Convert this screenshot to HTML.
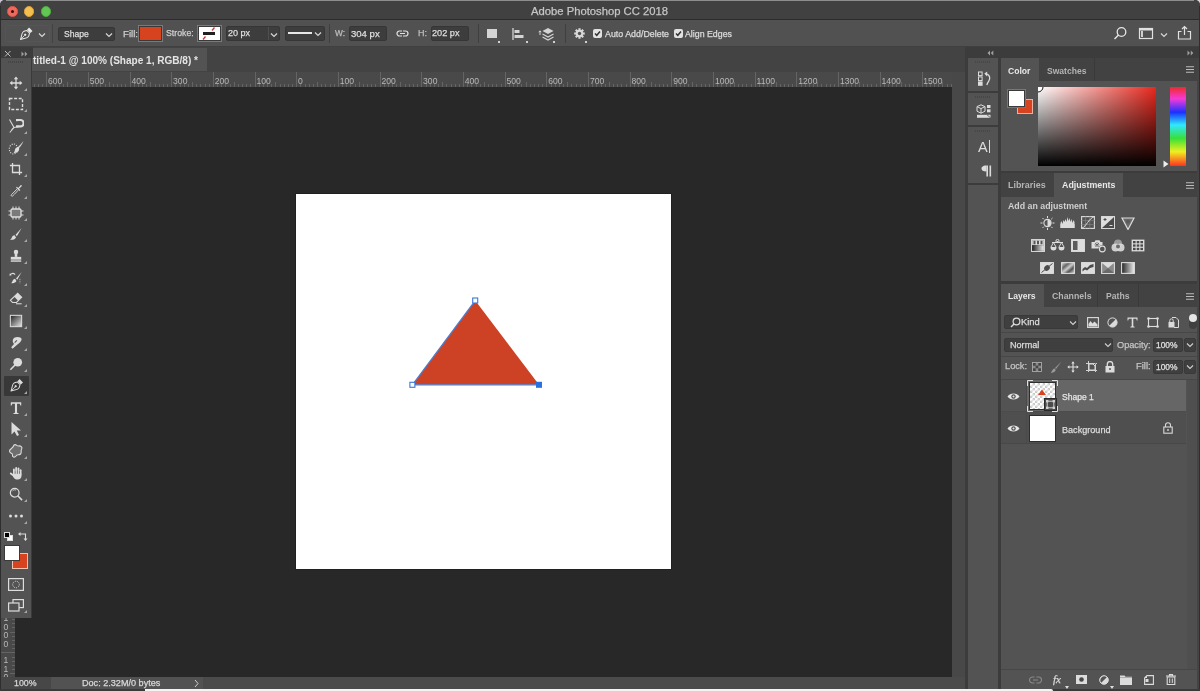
<!DOCTYPE html>
<html><head><meta charset="utf-8">
<style>
*{margin:0;padding:0;box-sizing:border-box}
html,body{width:1200px;height:691px;overflow:hidden;background:#3a3a3a}
body{position:relative;font-family:"Liberation Sans",sans-serif;color:#d0d0d0}
.a{position:absolute}
.t{position:absolute;white-space:nowrap;line-height:1;will-change:transform;-webkit-text-stroke:0.25px currentColor}
svg{will-change:transform}
.t[style*="bold"]{-webkit-text-stroke:0}
.box{position:absolute;background:#3d3d3d;border:1px solid #363636;border-radius:2px}
.sep{position:absolute;width:1px;background:#3c3c3c}
</style></head><body>
<div class="a" style="left:0;top:0;width:10px;height:10px;background:#cdc6d2"></div><div class="a" style="left:1190px;top:0;width:10px;height:10px;background:#d8d8d8"></div>
<div id="win" class="a" style="left:0;top:0;width:1200px;height:689px;background:#535353;border-radius:5px 5px 0 0;overflow:hidden">
  <!-- TITLE BAR -->
  <div class="a" style="left:0;top:0;width:1200px;height:20px;background:#414141;border-bottom:1px solid #2b2b2b"></div>
  <div class="a" style="left:7.35px;top:6.05px;width:10.5px;height:10.5px;border-radius:50%;background:#ed6a5e;border:0.6px solid #d9574c"></div>
  <div class="a" style="left:10.9px;top:9.6px;width:3.4px;height:3.4px;border-radius:50%;background:#4a0806"></div>
  <div class="a" style="left:23.85px;top:6.05px;width:10.5px;height:10.5px;border-radius:50%;background:#f5bf4f;border:0.6px solid #dca23a"></div>
  <div class="a" style="left:40.55px;top:6.05px;width:10.5px;height:10.5px;border-radius:50%;background:#62c655;border:0.6px solid #4ea83f"></div>
  <div class="t" style="left:530.7px;top:5.5px;font-size:11.25px;color:#c6c6c6">Adobe Photoshop CC 2018</div>

  <!-- OPTIONS BAR -->
  <div id="opt" class="a" style="left:0;top:20px;width:1200px;height:27px;background:#515151;border-bottom:1px solid #404040"></div>

  
  <!-- options contents -->
  <div class="a" style="left:5px;top:25px;width:45px;height:17px;border:1px solid #555;border-radius:2px"></div>
  <svg class="a" style="left:18px;top:26.5px" width="15" height="15" viewBox="0 0 15 15"><g transform="translate(7.5 7.5) rotate(45) scale(0.88) translate(-5 -8.5)"><path d="M5 16.5 C3.5 13 1 11 1 8.5 C1 6.5 2.3 5.5 2.8 4.2 H7.2 C7.7 5.5 9 6.5 9 8.5 C9 11 6.5 13 5 16.5Z" fill="none" stroke="#e8e8e8" stroke-width="1.15" stroke-linejoin="round"/><rect x="2.3" y="0" width="5.4" height="3.4" fill="#e8e8e8"/><circle cx="5" cy="9" r="1.3" fill="#e8e8e8"/><path d="M5 10 V16" stroke="#e8e8e8" stroke-width="0.9"/></g></svg>
  <svg class="a" style="left:38px;top:32px" width="8" height="6" viewBox="0 0 8 6"><path d="M1 1.5 L4 4.5 L7 1.5" fill="none" stroke="#d6d6d6" stroke-width="1.2"/></svg>
  <div class="sep" style="left:52px;top:24px;height:19px;background:#434343"></div>

  <div class="box" style="left:58px;top:27px;width:57px;height:14px"></div>
  <div class="t" style="left:64.2px;top:29.5px;font-size:8.61px;color:#dedede">Shape</div>
  <svg class="a" style="left:105px;top:32px" width="8" height="6" viewBox="0 0 8 6"><path d="M1 1.5 L4 4.5 L7 1.5" fill="none" stroke="#d6d6d6" stroke-width="1.2"/></svg>

  <div class="t" style="left:122.5px;top:28.6px;font-size:9.66px;color:#cfcfcf">Fill:</div>
  <div class="a" style="left:138px;top:25px;width:25px;height:17px;border:1px solid #7a7a7a;background:#3a3a3a"></div>
  <div class="a" style="left:140px;top:27px;width:21px;height:13px;background:#d8431f"></div>
  <div class="t" style="left:166.4px;top:29.4px;font-size:8.75px;color:#cfcfcf">Stroke:</div>
  <div class="a" style="left:197px;top:25px;width:25px;height:17px;border:1px solid #7a7a7a;background:#3a3a3a"></div>
  <div class="a" style="left:199px;top:27px;width:21px;height:13px;background:#ffffff"></div>
  <div class="a" style="left:203px;top:32px;width:12px;height:2.5px;background:#222"></div>
  <svg class="a" style="left:199px;top:27px" width="21" height="13" viewBox="0 0 21 13"><path d="M15.5 0.5 L13 3.5 M6.5 9.5 L4 12.5" stroke="#d33" stroke-width="1.3"/></svg>

  <div class="box" style="left:226px;top:26px;width:54px;height:15px"></div>
  <div class="sep" style="left:268px;top:27px;height:13px;background:#4f4f4f"></div>
  <div class="t" style="left:228.2px;top:29.1px;font-size:9.05px;color:#dedede">20 px</div>
  <svg class="a" style="left:270px;top:32px" width="8" height="6" viewBox="0 0 8 6"><path d="M1 1.5 L4 4.5 L7 1.5" fill="none" stroke="#d6d6d6" stroke-width="1.2"/></svg>

  <div class="box" style="left:285px;top:26px;width:40px;height:15px"></div>
  <div class="a" style="left:288px;top:32px;width:24px;height:1.6px;background:#e6e6e6"></div>
  <svg class="a" style="left:314px;top:31px" width="8" height="6" viewBox="0 0 8 6"><path d="M1 1.5 L4 4.5 L7 1.5" fill="none" stroke="#d6d6d6" stroke-width="1.2"/></svg>
  <div class="sep" style="left:329px;top:24px;height:19px;background:#3f3f3f"></div>

  <div class="t" style="left:334.8px;top:29.8px;font-size:8.25px;color:#bdbdbd">W:</div>
  <div class="box" style="left:349px;top:26px;width:38px;height:15px"></div>
  <div class="t" style="left:350.7px;top:28.7px;font-size:9.55px;color:#dedede">304 px</div>
  <svg class="a" style="left:396px;top:29px" width="13" height="9" viewBox="0 0 13 9"><path d="M6 2 H3.5 A2.5 2.5 0 0 0 3.5 7 H6 M7 2 H9.5 A2.5 2.5 0 0 1 9.5 7 H7 M4 4.5 H9" fill="none" stroke="#e0e0e0" stroke-width="1.2"/></svg>
  <div class="t" style="left:417.6px;top:29.2px;font-size:9.01px;color:#bdbdbd">H:</div>
  <div class="box" style="left:431px;top:26px;width:38px;height:15px"></div>
  <div class="t" style="left:431.9px;top:29.0px;font-size:9.18px;color:#dedede">202 px</div>
  <div class="sep" style="left:478px;top:24px;height:19px;background:#3f3f3f"></div>

  <div class="a" style="left:487px;top:29px;width:9.5px;height:9px;background:#d4d4d4"></div>
  <div class="a" style="left:498px;top:41px;width:2px;height:2px;background:#d0d0d0"></div>
  <svg class="a" style="left:512px;top:28px" width="14" height="12" viewBox="0 0 14 12"><path d="M1 0 V12" stroke="#d4d4d4" stroke-width="1.3"/><rect x="2.5" y="2" width="5" height="3" fill="#d4d4d4"/><rect x="2.5" y="7" width="9" height="3" fill="#d4d4d4"/></svg>
  <div class="a" style="left:526px;top:41px;width:2px;height:2px;background:#d0d0d0"></div>
  <svg class="a" style="left:538px;top:27px" width="18" height="14" viewBox="0 0 18 14"><path d="M2 8 V4 M0.8 5.2 L2 3.8 L3.2 5.2" fill="none" stroke="#d4d4d4" stroke-width="1"/><path d="M10 1 L15.5 4 L10 7 L4.5 4 Z" fill="#d4d4d4"/><path d="M4.5 7 L10 10 L15.5 7 M4.5 10 L10 13 L15.5 10" fill="none" stroke="#d4d4d4" stroke-width="1.1"/></svg>
  <div class="a" style="left:553px;top:41px;width:2px;height:2px;background:#d0d0d0"></div>
  <div class="sep" style="left:565px;top:24px;height:19px;background:#3f3f3f"></div>
  <svg class="a" style="left:573.5px;top:28px" width="11" height="11" viewBox="0 0 13 13"><g fill="#d8d8d8"><circle cx="6.5" cy="6.5" r="4.3"/><rect x="5.2" y="0.3" width="2.6" height="12.4"/><rect x="0.3" y="5.2" width="12.4" height="2.6"/><rect x="5.2" y="0.3" width="2.6" height="12.4" transform="rotate(45 6.5 6.5)"/><rect x="5.2" y="0.3" width="2.6" height="12.4" transform="rotate(-45 6.5 6.5)"/></g><circle cx="6.5" cy="6.5" r="2" fill="#515151"/></svg>
  <div class="a" style="left:585px;top:41px;width:2px;height:2px;background:#d0d0d0"></div>
  <div class="a" style="left:593px;top:29px;width:9px;height:9px;background:#e2e2e2;border-radius:2px"></div>
  <svg class="a" style="left:593px;top:29px" width="9" height="9" viewBox="0 0 9 9"><path d="M2 4.5 L3.8 6.3 L7 2.6" fill="none" stroke="#333" stroke-width="1.5"/></svg>
  <div class="t" style="left:604.7px;top:29.9px;font-size:8.87px;color:#dcdcdc">Auto Add/Delete</div>
  <div class="a" style="left:674px;top:29px;width:9px;height:9px;background:#e2e2e2;border-radius:2px"></div>
  <svg class="a" style="left:674px;top:29px" width="9" height="9" viewBox="0 0 9 9"><path d="M2 4.5 L3.8 6.3 L7 2.6" fill="none" stroke="#333" stroke-width="1.5"/></svg>
  <div class="t" style="left:685.3px;top:30.0px;font-size:8.8px;color:#dcdcdc">Align Edges</div>

  <svg class="a" style="left:1113px;top:26px" width="15" height="15" viewBox="0 0 15 15"><circle cx="8.5" cy="6" r="4.3" fill="none" stroke="#e6e6e6" stroke-width="1.3"/><path d="M5.5 9 L1.5 13" stroke="#e6e6e6" stroke-width="1.5"/></svg>
  <svg class="a" style="left:1138px;top:27px" width="16" height="13" viewBox="0 0 16 13"><rect x="1.5" y="1.5" width="13" height="10" fill="none" stroke="#e0e0e0" stroke-width="1.2"/><rect x="3" y="4" width="2" height="6" fill="#cfcfcf"/><rect x="1.5" y="1.5" width="13" height="2" fill="#e0e0e0"/></svg>
  <svg class="a" style="left:1160px;top:32px" width="8" height="6" viewBox="0 0 8 6"><path d="M1 1.5 L4 4.5 L7 1.5" fill="none" stroke="#d6d6d6" stroke-width="1.2"/></svg>
  <svg class="a" style="left:1177px;top:25px" width="15" height="15" viewBox="0 0 15 15"><path d="M4.5 6.5 H1.5 V14 H13.5 V6.5 H10.5" fill="none" stroke="#e0e0e0" stroke-width="1.2"/><path d="M7.5 10 V1.5 M5 4 L7.5 1.5 L10 4" fill="none" stroke="#e0e0e0" stroke-width="1.2"/></svg>

  <!-- DOC TAB BAR -->
  <div class="a" style="left:32px;top:47px;width:933px;height:25px;background:#434343"></div>
  <div class="a" style="left:32px;top:48px;width:175px;height:23px;background:#535353"></div>
  <div class="t" style="left:32.9px;top:55.7px;font-size:10.05px;font-weight:bold;color:#e4e4e4">titled-1 @ 100% (Shape 1, RGB/8) *</div>

  <!-- RULERS -->
  <div id="hruler" class="a" style="left:15px;top:72px;width:937px;height:15px;background:#494949"></div><svg class="a" style="left:0;top:72px" width="952" height="15" viewBox="0 0 952 15"><g stroke="#646464" stroke-width="1" shape-rendering="crispEdges"><line x1="17.5" y1="11.5" x2="17.5" y2="15"/><line x1="21.5" y1="11.5" x2="21.5" y2="15"/><line x1="25.5" y1="10" x2="25.5" y2="15"/><line x1="30.5" y1="11.5" x2="30.5" y2="15"/><line x1="34.5" y1="11.5" x2="34.5" y2="15"/><line x1="38.5" y1="11.5" x2="38.5" y2="15"/><line x1="42.5" y1="11.5" x2="42.5" y2="15"/><line x1="46.5" y1="0" x2="46.5" y2="15"/><line x1="50.5" y1="11.5" x2="50.5" y2="15"/><line x1="55.5" y1="11.5" x2="55.5" y2="15"/><line x1="59.5" y1="11.5" x2="59.5" y2="15"/><line x1="63.5" y1="11.5" x2="63.5" y2="15"/><line x1="67.5" y1="10" x2="67.5" y2="15"/><line x1="71.5" y1="11.5" x2="71.5" y2="15"/><line x1="75.5" y1="11.5" x2="75.5" y2="15"/><line x1="80.5" y1="11.5" x2="80.5" y2="15"/><line x1="84.5" y1="11.5" x2="84.5" y2="15"/><line x1="88.5" y1="0" x2="88.5" y2="15"/><line x1="92.5" y1="11.5" x2="92.5" y2="15"/><line x1="96.5" y1="11.5" x2="96.5" y2="15"/><line x1="100.5" y1="11.5" x2="100.5" y2="15"/><line x1="105.5" y1="11.5" x2="105.5" y2="15"/><line x1="109.5" y1="10" x2="109.5" y2="15"/><line x1="113.5" y1="11.5" x2="113.5" y2="15"/><line x1="117.5" y1="11.5" x2="117.5" y2="15"/><line x1="121.5" y1="11.5" x2="121.5" y2="15"/><line x1="125.5" y1="11.5" x2="125.5" y2="15"/><line x1="130.5" y1="0" x2="130.5" y2="15"/><line x1="134.5" y1="11.5" x2="134.5" y2="15"/><line x1="138.5" y1="11.5" x2="138.5" y2="15"/><line x1="142.5" y1="11.5" x2="142.5" y2="15"/><line x1="146.5" y1="11.5" x2="146.5" y2="15"/><line x1="150.5" y1="10" x2="150.5" y2="15"/><line x1="155.5" y1="11.5" x2="155.5" y2="15"/><line x1="159.5" y1="11.5" x2="159.5" y2="15"/><line x1="163.5" y1="11.5" x2="163.5" y2="15"/><line x1="167.5" y1="11.5" x2="167.5" y2="15"/><line x1="171.5" y1="0" x2="171.5" y2="15"/><line x1="175.5" y1="11.5" x2="175.5" y2="15"/><line x1="180.5" y1="11.5" x2="180.5" y2="15"/><line x1="184.5" y1="11.5" x2="184.5" y2="15"/><line x1="188.5" y1="11.5" x2="188.5" y2="15"/><line x1="192.5" y1="10" x2="192.5" y2="15"/><line x1="196.5" y1="11.5" x2="196.5" y2="15"/><line x1="200.5" y1="11.5" x2="200.5" y2="15"/><line x1="205.5" y1="11.5" x2="205.5" y2="15"/><line x1="209.5" y1="11.5" x2="209.5" y2="15"/><line x1="213.5" y1="0" x2="213.5" y2="15"/><line x1="217.5" y1="11.5" x2="217.5" y2="15"/><line x1="221.5" y1="11.5" x2="221.5" y2="15"/><line x1="225.5" y1="11.5" x2="225.5" y2="15"/><line x1="230.5" y1="11.5" x2="230.5" y2="15"/><line x1="234.5" y1="10" x2="234.5" y2="15"/><line x1="238.5" y1="11.5" x2="238.5" y2="15"/><line x1="242.5" y1="11.5" x2="242.5" y2="15"/><line x1="246.5" y1="11.5" x2="246.5" y2="15"/><line x1="250.5" y1="11.5" x2="250.5" y2="15"/><line x1="255.5" y1="0" x2="255.5" y2="15"/><line x1="259.5" y1="11.5" x2="259.5" y2="15"/><line x1="263.5" y1="11.5" x2="263.5" y2="15"/><line x1="267.5" y1="11.5" x2="267.5" y2="15"/><line x1="271.5" y1="11.5" x2="271.5" y2="15"/><line x1="275.5" y1="10" x2="275.5" y2="15"/><line x1="280.5" y1="11.5" x2="280.5" y2="15"/><line x1="284.5" y1="11.5" x2="284.5" y2="15"/><line x1="288.5" y1="11.5" x2="288.5" y2="15"/><line x1="292.5" y1="11.5" x2="292.5" y2="15"/><line x1="296.5" y1="0" x2="296.5" y2="15"/><line x1="300.5" y1="11.5" x2="300.5" y2="15"/><line x1="305.5" y1="11.5" x2="305.5" y2="15"/><line x1="309.5" y1="11.5" x2="309.5" y2="15"/><line x1="313.5" y1="11.5" x2="313.5" y2="15"/><line x1="317.5" y1="10" x2="317.5" y2="15"/><line x1="321.5" y1="11.5" x2="321.5" y2="15"/><line x1="325.5" y1="11.5" x2="325.5" y2="15"/><line x1="330.5" y1="11.5" x2="330.5" y2="15"/><line x1="334.5" y1="11.5" x2="334.5" y2="15"/><line x1="338.5" y1="0" x2="338.5" y2="15"/><line x1="342.5" y1="11.5" x2="342.5" y2="15"/><line x1="346.5" y1="11.5" x2="346.5" y2="15"/><line x1="350.5" y1="11.5" x2="350.5" y2="15"/><line x1="355.5" y1="11.5" x2="355.5" y2="15"/><line x1="359.5" y1="10" x2="359.5" y2="15"/><line x1="363.5" y1="11.5" x2="363.5" y2="15"/><line x1="367.5" y1="11.5" x2="367.5" y2="15"/><line x1="371.5" y1="11.5" x2="371.5" y2="15"/><line x1="375.5" y1="11.5" x2="375.5" y2="15"/><line x1="380.5" y1="0" x2="380.5" y2="15"/><line x1="384.5" y1="11.5" x2="384.5" y2="15"/><line x1="388.5" y1="11.5" x2="388.5" y2="15"/><line x1="392.5" y1="11.5" x2="392.5" y2="15"/><line x1="396.5" y1="11.5" x2="396.5" y2="15"/><line x1="400.5" y1="10" x2="400.5" y2="15"/><line x1="405.5" y1="11.5" x2="405.5" y2="15"/><line x1="409.5" y1="11.5" x2="409.5" y2="15"/><line x1="413.5" y1="11.5" x2="413.5" y2="15"/><line x1="417.5" y1="11.5" x2="417.5" y2="15"/><line x1="421.5" y1="0" x2="421.5" y2="15"/><line x1="426.5" y1="11.5" x2="426.5" y2="15"/><line x1="430.5" y1="11.5" x2="430.5" y2="15"/><line x1="434.5" y1="11.5" x2="434.5" y2="15"/><line x1="438.5" y1="11.5" x2="438.5" y2="15"/><line x1="442.5" y1="10" x2="442.5" y2="15"/><line x1="446.5" y1="11.5" x2="446.5" y2="15"/><line x1="451.5" y1="11.5" x2="451.5" y2="15"/><line x1="455.5" y1="11.5" x2="455.5" y2="15"/><line x1="459.5" y1="11.5" x2="459.5" y2="15"/><line x1="463.5" y1="0" x2="463.5" y2="15"/><line x1="467.5" y1="11.5" x2="467.5" y2="15"/><line x1="471.5" y1="11.5" x2="471.5" y2="15"/><line x1="476.5" y1="11.5" x2="476.5" y2="15"/><line x1="480.5" y1="11.5" x2="480.5" y2="15"/><line x1="484.5" y1="10" x2="484.5" y2="15"/><line x1="488.5" y1="11.5" x2="488.5" y2="15"/><line x1="492.5" y1="11.5" x2="492.5" y2="15"/><line x1="496.5" y1="11.5" x2="496.5" y2="15"/><line x1="501.5" y1="11.5" x2="501.5" y2="15"/><line x1="505.5" y1="0" x2="505.5" y2="15"/><line x1="509.5" y1="11.5" x2="509.5" y2="15"/><line x1="513.5" y1="11.5" x2="513.5" y2="15"/><line x1="517.5" y1="11.5" x2="517.5" y2="15"/><line x1="521.5" y1="11.5" x2="521.5" y2="15"/><line x1="526.5" y1="10" x2="526.5" y2="15"/><line x1="530.5" y1="11.5" x2="530.5" y2="15"/><line x1="534.5" y1="11.5" x2="534.5" y2="15"/><line x1="538.5" y1="11.5" x2="538.5" y2="15"/><line x1="542.5" y1="11.5" x2="542.5" y2="15"/><line x1="546.5" y1="0" x2="546.5" y2="15"/><line x1="551.5" y1="11.5" x2="551.5" y2="15"/><line x1="555.5" y1="11.5" x2="555.5" y2="15"/><line x1="559.5" y1="11.5" x2="559.5" y2="15"/><line x1="563.5" y1="11.5" x2="563.5" y2="15"/><line x1="567.5" y1="10" x2="567.5" y2="15"/><line x1="571.5" y1="11.5" x2="571.5" y2="15"/><line x1="576.5" y1="11.5" x2="576.5" y2="15"/><line x1="580.5" y1="11.5" x2="580.5" y2="15"/><line x1="584.5" y1="11.5" x2="584.5" y2="15"/><line x1="588.5" y1="0" x2="588.5" y2="15"/><line x1="592.5" y1="11.5" x2="592.5" y2="15"/><line x1="596.5" y1="11.5" x2="596.5" y2="15"/><line x1="601.5" y1="11.5" x2="601.5" y2="15"/><line x1="605.5" y1="11.5" x2="605.5" y2="15"/><line x1="609.5" y1="10" x2="609.5" y2="15"/><line x1="613.5" y1="11.5" x2="613.5" y2="15"/><line x1="617.5" y1="11.5" x2="617.5" y2="15"/><line x1="621.5" y1="11.5" x2="621.5" y2="15"/><line x1="626.5" y1="11.5" x2="626.5" y2="15"/><line x1="630.5" y1="0" x2="630.5" y2="15"/><line x1="634.5" y1="11.5" x2="634.5" y2="15"/><line x1="638.5" y1="11.5" x2="638.5" y2="15"/><line x1="642.5" y1="11.5" x2="642.5" y2="15"/><line x1="646.5" y1="11.5" x2="646.5" y2="15"/><line x1="651.5" y1="10" x2="651.5" y2="15"/><line x1="655.5" y1="11.5" x2="655.5" y2="15"/><line x1="659.5" y1="11.5" x2="659.5" y2="15"/><line x1="663.5" y1="11.5" x2="663.5" y2="15"/><line x1="667.5" y1="11.5" x2="667.5" y2="15"/><line x1="671.5" y1="0" x2="671.5" y2="15"/><line x1="676.5" y1="11.5" x2="676.5" y2="15"/><line x1="680.5" y1="11.5" x2="680.5" y2="15"/><line x1="684.5" y1="11.5" x2="684.5" y2="15"/><line x1="688.5" y1="11.5" x2="688.5" y2="15"/><line x1="692.5" y1="10" x2="692.5" y2="15"/><line x1="696.5" y1="11.5" x2="696.5" y2="15"/><line x1="701.5" y1="11.5" x2="701.5" y2="15"/><line x1="705.5" y1="11.5" x2="705.5" y2="15"/><line x1="709.5" y1="11.5" x2="709.5" y2="15"/><line x1="713.5" y1="0" x2="713.5" y2="15"/><line x1="717.5" y1="11.5" x2="717.5" y2="15"/><line x1="721.5" y1="11.5" x2="721.5" y2="15"/><line x1="726.5" y1="11.5" x2="726.5" y2="15"/><line x1="730.5" y1="11.5" x2="730.5" y2="15"/><line x1="734.5" y1="10" x2="734.5" y2="15"/><line x1="738.5" y1="11.5" x2="738.5" y2="15"/><line x1="742.5" y1="11.5" x2="742.5" y2="15"/><line x1="746.5" y1="11.5" x2="746.5" y2="15"/><line x1="751.5" y1="11.5" x2="751.5" y2="15"/><line x1="755.5" y1="0" x2="755.5" y2="15"/><line x1="759.5" y1="11.5" x2="759.5" y2="15"/><line x1="763.5" y1="11.5" x2="763.5" y2="15"/><line x1="767.5" y1="11.5" x2="767.5" y2="15"/><line x1="771.5" y1="11.5" x2="771.5" y2="15"/><line x1="776.5" y1="10" x2="776.5" y2="15"/><line x1="780.5" y1="11.5" x2="780.5" y2="15"/><line x1="784.5" y1="11.5" x2="784.5" y2="15"/><line x1="788.5" y1="11.5" x2="788.5" y2="15"/><line x1="792.5" y1="11.5" x2="792.5" y2="15"/><line x1="796.5" y1="0" x2="796.5" y2="15"/><line x1="801.5" y1="11.5" x2="801.5" y2="15"/><line x1="805.5" y1="11.5" x2="805.5" y2="15"/><line x1="809.5" y1="11.5" x2="809.5" y2="15"/><line x1="813.5" y1="11.5" x2="813.5" y2="15"/><line x1="817.5" y1="10" x2="817.5" y2="15"/><line x1="821.5" y1="11.5" x2="821.5" y2="15"/><line x1="826.5" y1="11.5" x2="826.5" y2="15"/><line x1="830.5" y1="11.5" x2="830.5" y2="15"/><line x1="834.5" y1="11.5" x2="834.5" y2="15"/><line x1="838.5" y1="0" x2="838.5" y2="15"/><line x1="842.5" y1="11.5" x2="842.5" y2="15"/><line x1="846.5" y1="11.5" x2="846.5" y2="15"/><line x1="851.5" y1="11.5" x2="851.5" y2="15"/><line x1="855.5" y1="11.5" x2="855.5" y2="15"/><line x1="859.5" y1="10" x2="859.5" y2="15"/><line x1="863.5" y1="11.5" x2="863.5" y2="15"/><line x1="867.5" y1="11.5" x2="867.5" y2="15"/><line x1="871.5" y1="11.5" x2="871.5" y2="15"/><line x1="876.5" y1="11.5" x2="876.5" y2="15"/><line x1="880.5" y1="0" x2="880.5" y2="15"/><line x1="884.5" y1="11.5" x2="884.5" y2="15"/><line x1="888.5" y1="11.5" x2="888.5" y2="15"/><line x1="892.5" y1="11.5" x2="892.5" y2="15"/><line x1="896.5" y1="11.5" x2="896.5" y2="15"/><line x1="901.5" y1="10" x2="901.5" y2="15"/><line x1="905.5" y1="11.5" x2="905.5" y2="15"/><line x1="909.5" y1="11.5" x2="909.5" y2="15"/><line x1="913.5" y1="11.5" x2="913.5" y2="15"/><line x1="917.5" y1="11.5" x2="917.5" y2="15"/><line x1="922.5" y1="0" x2="922.5" y2="15"/><line x1="926.5" y1="11.5" x2="926.5" y2="15"/><line x1="930.5" y1="11.5" x2="930.5" y2="15"/><line x1="934.5" y1="11.5" x2="934.5" y2="15"/><line x1="938.5" y1="11.5" x2="938.5" y2="15"/><line x1="942.5" y1="10" x2="942.5" y2="15"/><line x1="947.5" y1="11.5" x2="947.5" y2="15"/><line x1="951.5" y1="11.5" x2="951.5" y2="15"/></g><g font-family="Liberation Sans" font-size="8.6" fill="#b8b8b8"><text x="48.0" y="12">600</text><text x="89.7" y="12">500</text><text x="131.4" y="12">400</text><text x="173.1" y="12">300</text><text x="214.7" y="12">200</text><text x="256.4" y="12">100</text><text x="298.1" y="12">0</text><text x="339.8" y="12">100</text><text x="381.5" y="12">200</text><text x="423.1" y="12">300</text><text x="464.8" y="12">400</text><text x="506.5" y="12">500</text><text x="548.2" y="12">600</text><text x="589.9" y="12">700</text><text x="631.5" y="12">800</text><text x="673.2" y="12">900</text><text x="714.9" y="12">1000</text><text x="756.6" y="12">1100</text><text x="798.3" y="12">1200</text><text x="839.9" y="12">1300</text><text x="881.6" y="12">1400</text><text x="923.3" y="12">1500</text></g></svg>
  <div id="vruler" class="a" style="left:1px;top:72px;width:14px;height:605px;background:#494949"></div><svg class="a" style="left:1px;top:87px" width="14" height="590" viewBox="0 87 14 590"><g stroke="#646464" stroke-width="1" shape-rendering="crispEdges"><line x1="9" y1="90.5" x2="14" y2="90.5"/><line x1="10.5" y1="94.5" x2="14" y2="94.5"/><line x1="10.5" y1="98.5" x2="14" y2="98.5"/><line x1="10.5" y1="102.5" x2="14" y2="102.5"/><line x1="10.5" y1="106.5" x2="14" y2="106.5"/><line x1="0" y1="111.5" x2="14" y2="111.5"/><line x1="10.5" y1="115.5" x2="14" y2="115.5"/><line x1="10.5" y1="119.5" x2="14" y2="119.5"/><line x1="10.5" y1="123.5" x2="14" y2="123.5"/><line x1="10.5" y1="127.5" x2="14" y2="127.5"/><line x1="9" y1="131.5" x2="14" y2="131.5"/><line x1="10.5" y1="136.5" x2="14" y2="136.5"/><line x1="10.5" y1="140.5" x2="14" y2="140.5"/><line x1="10.5" y1="144.5" x2="14" y2="144.5"/><line x1="10.5" y1="148.5" x2="14" y2="148.5"/><line x1="0" y1="152.5" x2="14" y2="152.5"/><line x1="10.5" y1="156.5" x2="14" y2="156.5"/><line x1="10.5" y1="161.5" x2="14" y2="161.5"/><line x1="10.5" y1="165.5" x2="14" y2="165.5"/><line x1="10.5" y1="169.5" x2="14" y2="169.5"/><line x1="9" y1="173.5" x2="14" y2="173.5"/><line x1="10.5" y1="177.5" x2="14" y2="177.5"/><line x1="10.5" y1="181.5" x2="14" y2="181.5"/><line x1="10.5" y1="186.5" x2="14" y2="186.5"/><line x1="10.5" y1="190.5" x2="14" y2="190.5"/><line x1="0" y1="194.5" x2="14" y2="194.5"/><line x1="10.5" y1="198.5" x2="14" y2="198.5"/><line x1="10.5" y1="202.5" x2="14" y2="202.5"/><line x1="10.5" y1="207.5" x2="14" y2="207.5"/><line x1="10.5" y1="211.5" x2="14" y2="211.5"/><line x1="9" y1="215.5" x2="14" y2="215.5"/><line x1="10.5" y1="219.5" x2="14" y2="219.5"/><line x1="10.5" y1="223.5" x2="14" y2="223.5"/><line x1="10.5" y1="227.5" x2="14" y2="227.5"/><line x1="10.5" y1="232.5" x2="14" y2="232.5"/><line x1="0" y1="236.5" x2="14" y2="236.5"/><line x1="10.5" y1="240.5" x2="14" y2="240.5"/><line x1="10.5" y1="244.5" x2="14" y2="244.5"/><line x1="10.5" y1="248.5" x2="14" y2="248.5"/><line x1="10.5" y1="252.5" x2="14" y2="252.5"/><line x1="9" y1="257.5" x2="14" y2="257.5"/><line x1="10.5" y1="261.5" x2="14" y2="261.5"/><line x1="10.5" y1="265.5" x2="14" y2="265.5"/><line x1="10.5" y1="269.5" x2="14" y2="269.5"/><line x1="10.5" y1="273.5" x2="14" y2="273.5"/><line x1="0" y1="277.5" x2="14" y2="277.5"/><line x1="10.5" y1="282.5" x2="14" y2="282.5"/><line x1="10.5" y1="286.5" x2="14" y2="286.5"/><line x1="10.5" y1="290.5" x2="14" y2="290.5"/><line x1="10.5" y1="294.5" x2="14" y2="294.5"/><line x1="9" y1="298.5" x2="14" y2="298.5"/><line x1="10.5" y1="302.5" x2="14" y2="302.5"/><line x1="10.5" y1="307.5" x2="14" y2="307.5"/><line x1="10.5" y1="311.5" x2="14" y2="311.5"/><line x1="10.5" y1="315.5" x2="14" y2="315.5"/><line x1="0" y1="319.5" x2="14" y2="319.5"/><line x1="10.5" y1="323.5" x2="14" y2="323.5"/><line x1="10.5" y1="327.5" x2="14" y2="327.5"/><line x1="10.5" y1="332.5" x2="14" y2="332.5"/><line x1="10.5" y1="336.5" x2="14" y2="336.5"/><line x1="9" y1="340.5" x2="14" y2="340.5"/><line x1="10.5" y1="344.5" x2="14" y2="344.5"/><line x1="10.5" y1="348.5" x2="14" y2="348.5"/><line x1="10.5" y1="352.5" x2="14" y2="352.5"/><line x1="10.5" y1="357.5" x2="14" y2="357.5"/><line x1="0" y1="361.5" x2="14" y2="361.5"/><line x1="10.5" y1="365.5" x2="14" y2="365.5"/><line x1="10.5" y1="369.5" x2="14" y2="369.5"/><line x1="10.5" y1="373.5" x2="14" y2="373.5"/><line x1="10.5" y1="377.5" x2="14" y2="377.5"/><line x1="9" y1="382.5" x2="14" y2="382.5"/><line x1="10.5" y1="386.5" x2="14" y2="386.5"/><line x1="10.5" y1="390.5" x2="14" y2="390.5"/><line x1="10.5" y1="394.5" x2="14" y2="394.5"/><line x1="10.5" y1="398.5" x2="14" y2="398.5"/><line x1="0" y1="402.5" x2="14" y2="402.5"/><line x1="10.5" y1="407.5" x2="14" y2="407.5"/><line x1="10.5" y1="411.5" x2="14" y2="411.5"/><line x1="10.5" y1="415.5" x2="14" y2="415.5"/><line x1="10.5" y1="419.5" x2="14" y2="419.5"/><line x1="9" y1="423.5" x2="14" y2="423.5"/><line x1="10.5" y1="427.5" x2="14" y2="427.5"/><line x1="10.5" y1="432.5" x2="14" y2="432.5"/><line x1="10.5" y1="436.5" x2="14" y2="436.5"/><line x1="10.5" y1="440.5" x2="14" y2="440.5"/><line x1="0" y1="444.5" x2="14" y2="444.5"/><line x1="10.5" y1="448.5" x2="14" y2="448.5"/><line x1="10.5" y1="452.5" x2="14" y2="452.5"/><line x1="10.5" y1="457.5" x2="14" y2="457.5"/><line x1="10.5" y1="461.5" x2="14" y2="461.5"/><line x1="9" y1="465.5" x2="14" y2="465.5"/><line x1="10.5" y1="469.5" x2="14" y2="469.5"/><line x1="10.5" y1="473.5" x2="14" y2="473.5"/><line x1="10.5" y1="477.5" x2="14" y2="477.5"/><line x1="10.5" y1="482.5" x2="14" y2="482.5"/><line x1="0" y1="486.5" x2="14" y2="486.5"/><line x1="10.5" y1="490.5" x2="14" y2="490.5"/><line x1="10.5" y1="494.5" x2="14" y2="494.5"/><line x1="10.5" y1="498.5" x2="14" y2="498.5"/><line x1="10.5" y1="502.5" x2="14" y2="502.5"/><line x1="9" y1="507.5" x2="14" y2="507.5"/><line x1="10.5" y1="511.5" x2="14" y2="511.5"/><line x1="10.5" y1="515.5" x2="14" y2="515.5"/><line x1="10.5" y1="519.5" x2="14" y2="519.5"/><line x1="10.5" y1="523.5" x2="14" y2="523.5"/><line x1="0" y1="527.5" x2="14" y2="527.5"/><line x1="10.5" y1="532.5" x2="14" y2="532.5"/><line x1="10.5" y1="536.5" x2="14" y2="536.5"/><line x1="10.5" y1="540.5" x2="14" y2="540.5"/><line x1="10.5" y1="544.5" x2="14" y2="544.5"/><line x1="9" y1="548.5" x2="14" y2="548.5"/><line x1="10.5" y1="552.5" x2="14" y2="552.5"/><line x1="10.5" y1="557.5" x2="14" y2="557.5"/><line x1="10.5" y1="561.5" x2="14" y2="561.5"/><line x1="10.5" y1="565.5" x2="14" y2="565.5"/><line x1="0" y1="569.5" x2="14" y2="569.5"/><line x1="10.5" y1="573.5" x2="14" y2="573.5"/><line x1="10.5" y1="577.5" x2="14" y2="577.5"/><line x1="10.5" y1="582.5" x2="14" y2="582.5"/><line x1="10.5" y1="586.5" x2="14" y2="586.5"/><line x1="9" y1="590.5" x2="14" y2="590.5"/><line x1="10.5" y1="594.5" x2="14" y2="594.5"/><line x1="10.5" y1="598.5" x2="14" y2="598.5"/><line x1="10.5" y1="602.5" x2="14" y2="602.5"/><line x1="10.5" y1="607.5" x2="14" y2="607.5"/><line x1="0" y1="611.5" x2="14" y2="611.5"/><line x1="10.5" y1="615.5" x2="14" y2="615.5"/><line x1="10.5" y1="619.5" x2="14" y2="619.5"/><line x1="10.5" y1="623.5" x2="14" y2="623.5"/><line x1="10.5" y1="627.5" x2="14" y2="627.5"/><line x1="9" y1="632.5" x2="14" y2="632.5"/><line x1="10.5" y1="636.5" x2="14" y2="636.5"/><line x1="10.5" y1="640.5" x2="14" y2="640.5"/><line x1="10.5" y1="644.5" x2="14" y2="644.5"/><line x1="10.5" y1="648.5" x2="14" y2="648.5"/><line x1="0" y1="652.5" x2="14" y2="652.5"/><line x1="10.5" y1="657.5" x2="14" y2="657.5"/><line x1="10.5" y1="661.5" x2="14" y2="661.5"/><line x1="10.5" y1="665.5" x2="14" y2="665.5"/><line x1="10.5" y1="669.5" x2="14" y2="669.5"/><line x1="9" y1="673.5" x2="14" y2="673.5"/></g><g font-family="Liberation Sans" font-size="8.6" fill="#b8b8b8" text-anchor="middle"><text x="5" y="88.0">0</text><text x="5" y="96.5">0</text><text x="5" y="121.1">2</text><text x="5" y="129.6">0</text><text x="5" y="138.1">0</text><text x="5" y="162.8">1</text><text x="5" y="171.3">0</text><text x="5" y="179.8">0</text><text x="5" y="204.5">0</text><text x="5" y="246.2">1</text><text x="5" y="254.7">0</text><text x="5" y="263.2">0</text><text x="5" y="287.9">2</text><text x="5" y="296.4">0</text><text x="5" y="304.9">0</text><text x="5" y="329.5">3</text><text x="5" y="338.0">0</text><text x="5" y="346.5">0</text><text x="5" y="371.2">4</text><text x="5" y="379.7">0</text><text x="5" y="388.2">0</text><text x="5" y="412.9">5</text><text x="5" y="421.4">0</text><text x="5" y="429.9">0</text><text x="5" y="454.6">6</text><text x="5" y="463.1">0</text><text x="5" y="471.6">0</text><text x="5" y="496.3">7</text><text x="5" y="504.8">0</text><text x="5" y="513.3">0</text><text x="5" y="537.9">8</text><text x="5" y="546.4">0</text><text x="5" y="554.9">0</text><text x="5" y="579.6">9</text><text x="5" y="588.1">0</text><text x="5" y="596.6">0</text><text x="5" y="621.3">1</text><text x="5" y="629.8">0</text><text x="5" y="638.3">0</text><text x="5" y="646.8">0</text><text x="5" y="663.0">1</text><text x="5" y="671.5">1</text><text x="5" y="680.0">0</text></g></svg>

  <!-- PASTEBOARD -->
  <div class="a" style="left:15px;top:87px;width:937px;height:590px;background:#282828"></div>
  <div class="a" style="left:952px;top:72px;width:13px;height:605px;background:#484848"></div>
  <!-- canvas -->
  <div class="a" style="left:295px;top:193px;width:377px;height:377px;background:#202020"></div>
  <div class="a" style="left:296px;top:194px;width:375px;height:375px;background:#ffffff"></div>
  <svg class="a" style="left:296px;top:194px" width="374" height="375" viewBox="296 194 374 375">
    <path d="M475.2 300.6 L539 384.8 L412.4 384.8 Z" fill="#cd4225"/>
    <path d="M412.4 384.8 L475.2 300.6" fill="none" stroke="#4a7fd4" stroke-width="1.2"/>
    <path d="M412.4 384.8 L539 384.8" fill="none" stroke="#4a7fd4" stroke-width="1.2"/>
    <rect x="472.7" y="298" width="5" height="5" fill="#fff" stroke="#3a78d8" stroke-width="1.1"/>
    <rect x="409.9" y="382.3" width="5" height="5" fill="#fff" stroke="#3a78d8" stroke-width="1.1"/>
    <rect x="536" y="381.8" width="6" height="6" fill="#2a70e0"/>
  </svg>

  <!-- STATUS BAR -->
  <div class="a" style="left:0;top:677px;width:965px;height:12px;background:#4b4b4b"></div>
  <div class="a" style="left:1px;top:677px;width:50px;height:12px;background:#474747"></div>
  <div class="a" style="left:51px;top:677px;width:152px;height:12px;background:#525252"></div>
  <div class="t" style="left:14.4px;top:678.5px;font-size:8.83px;color:#d8d8d8">100%</div>
  <div class="t" style="left:81.8px;top:679.1px;font-size:9.11px;color:#d8d8d8">Doc: 2.32M/0 bytes</div>
  <svg class="a" style="left:194px;top:679px" width="5" height="9" viewBox="0 0 5 9"><path d="M1 1 L4 4.5 L1 8" fill="none" stroke="#d0d0d0" stroke-width="1"/></svg>

  <!-- LEFT TOOLBAR -->
  <div class="a" style="left:0;top:47px;width:33px;height:11px;background:#3c3c3c"></div>
  <div id="tools" class="a" style="left:1px;top:58px;width:31px;height:560px;background:#535353;border-right:1px solid #3a3a3a"></div>

  <svg class="a" style="left:4px;top:50px" width="8" height="7" viewBox="0 0 8 7"><path d="M1 1 L6.5 6.5 M6.5 1 L1 6.5" stroke="#bfbfbf" stroke-width="1"/></svg>
<svg class="a" style="left:20.5px;top:50.5px" width="7" height="6" viewBox="0 0 7 6"><path d="M0.5 0.5 L3 3 L0.5 5.5Z M3.8 0.5 L6.3 3 L3.8 5.5Z" fill="#a0a0a0"/></svg>
<div class="a" style="left:8px;top:61px;width:16px;height:2px;background:repeating-linear-gradient(90deg,#444 0 1px,transparent 1px 2px)"></div>
<svg class="a" style="left:8px;top:74.8px" width="16" height="16" viewBox="0 0 16 16"><g transform="translate(8 8) scale(0.8) translate(-8 -8)"><path d="M8 2 L8 14 M2 8 L14 8" stroke="#dcdcdc" stroke-width="1.6"/><path d="M8 0 L5.2 3.4 H10.8Z M8 16 L5.2 12.6 H10.8Z M0 8 L3.4 5.2 V10.8Z M16 8 L12.6 5.2 V10.8Z" fill="#dcdcdc"/></g></svg>
<svg class="a" style="left:24px;top:87.8px" width="3" height="3" viewBox="0 0 3 3"><path d="M3 0 V3 H0Z" fill="#a8a8a8"/></svg>
<svg class="a" style="left:8px;top:96.4px" width="16" height="16" viewBox="0 0 16 16"><rect x="1.5" y="2.5" width="13" height="11" fill="none" stroke="#dcdcdc" stroke-width="1.4" stroke-dasharray="3 1.6"/></svg>
<svg class="a" style="left:24px;top:109.4px" width="3" height="3" viewBox="0 0 3 3"><path d="M3 0 V3 H0Z" fill="#a8a8a8"/></svg>
<svg class="a" style="left:8px;top:118.1px" width="16" height="16" viewBox="0 0 16 16"><path d="M1.5 1.5 L6 9.5 L1.8 14.5 M6 9.5 L12 8.5 M6 9.5 L3.5 12" fill="none" stroke="#dcdcdc" stroke-width="1.1" stroke-linejoin="round"/><path d="M9.5 2 H12.5 A3.2 3.2 0 0 1 12.5 8.4 H9.5" fill="none" stroke="#dcdcdc" stroke-width="2.2"/><rect x="8" y="1" width="2.2" height="2.2" fill="#dcdcdc"/><rect x="8" y="7.3" width="2.2" height="2.2" fill="#dcdcdc"/></svg>
<svg class="a" style="left:24px;top:131.1px" width="3" height="3" viewBox="0 0 3 3"><path d="M3 0 V3 H0Z" fill="#a8a8a8"/></svg>
<svg class="a" style="left:8px;top:139.8px" width="16" height="16" viewBox="0 0 16 16"><ellipse cx="5.5" cy="9" rx="4.2" ry="5" fill="none" stroke="#dcdcdc" stroke-width="1.1" stroke-dasharray="1.1 1.3"/><path d="M15.5 1 C14 3 11.5 5.5 10 7 C8.2 7.3 7 8.5 6.8 10.5 C6.7 11.5 6.3 12.3 5.5 13 C8.5 13.2 10.5 11.8 11 10 C11.3 9 11.2 8.5 11 8 C12.5 6.5 14.5 3.5 15.5 1Z" fill="#dcdcdc"/></svg>
<svg class="a" style="left:24px;top:152.8px" width="3" height="3" viewBox="0 0 3 3"><path d="M3 0 V3 H0Z" fill="#a8a8a8"/></svg>
<svg class="a" style="left:8px;top:161.4px" width="16" height="16" viewBox="0 0 16 16"><g transform="translate(8 8) scale(0.87) translate(-8 -8)"><path d="M1 4 H12 V15 M4 1 V12 H15" fill="none" stroke="#dcdcdc" stroke-width="1.5"/></g></svg>
<svg class="a" style="left:24px;top:174.4px" width="3" height="3" viewBox="0 0 3 3"><path d="M3 0 V3 H0Z" fill="#a8a8a8"/></svg>
<svg class="a" style="left:8px;top:183.1px" width="16" height="16" viewBox="0 0 16 16"><g transform="translate(8 8) scale(0.87) translate(-8 -8)"><path d="M9.5 5.5 L3 12 C2 13 2.5 14 3.5 14 C4.5 14 10.5 7 10.5 7" fill="none" stroke="#dcdcdc" stroke-width="1.1"/><path d="M8 4 L12 8 L13 7 L11.5 5.5 L14.5 2.5 C15 1.5 14 0.8 13.3 1.3 L10.5 4.5 L9 3Z" fill="#dcdcdc"/></g></svg>
<svg class="a" style="left:24px;top:196.1px" width="3" height="3" viewBox="0 0 3 3"><path d="M3 0 V3 H0Z" fill="#a8a8a8"/></svg>
<svg class="a" style="left:8px;top:204.7px" width="16" height="16" viewBox="0 0 16 16"><rect x="3" y="4" width="10" height="8" rx="1.5" fill="#7a7a7a" stroke="#dcdcdc" stroke-width="1.4"/><path d="M5 1.5 V4 M8 1.5 V4 M11 1.5 V4 M5 12 V14.5 M8 12 V14.5 M11 12 V14.5 M0.5 6 H3 M0.5 10 H3 M13 6 H15.5 M13 10 H15.5" stroke="#dcdcdc" stroke-width="1"/></svg>
<svg class="a" style="left:24px;top:217.7px" width="3" height="3" viewBox="0 0 3 3"><path d="M3 0 V3 H0Z" fill="#a8a8a8"/></svg>
<svg class="a" style="left:8px;top:226.3px" width="16" height="16" viewBox="0 0 16 16"><g transform="translate(8 8) scale(0.87) translate(-8 -8)"><path d="M14.5 1 L7.5 9 L9 10.5 Z" fill="#dcdcdc"/><path d="M6.5 9.5 C4.5 9.5 3.5 11 3 12.5 C2.6 13.5 2 14 1 14.5 C4 15 7 14.5 8 12 Z" fill="#dcdcdc"/></g></svg>
<svg class="a" style="left:24px;top:239.3px" width="3" height="3" viewBox="0 0 3 3"><path d="M3 0 V3 H0Z" fill="#a8a8a8"/></svg>
<svg class="a" style="left:8px;top:248.0px" width="16" height="16" viewBox="0 0 16 16"><g transform="translate(8 8) scale(0.87) translate(-8 -8)"><circle cx="8" cy="3.5" r="2.6" fill="#dcdcdc"/><rect x="6.5" y="5" width="3" height="4" fill="#dcdcdc"/><rect x="2" y="9" width="12" height="3.2" fill="#dcdcdc"/><rect x="2" y="13" width="12" height="1.6" fill="#dcdcdc"/></g></svg>
<svg class="a" style="left:24px;top:261.0px" width="3" height="3" viewBox="0 0 3 3"><path d="M3 0 V3 H0Z" fill="#a8a8a8"/></svg>
<svg class="a" style="left:8px;top:269.6px" width="16" height="16" viewBox="0 0 16 16"><g transform="translate(8 8) scale(0.87) translate(-8 -8)"><path d="M14.5 1 L8 8.5 L9.5 10 Z" fill="#dcdcdc"/><path d="M7 9 C5.5 9 4.5 10.5 4 11.5 C3.6 12.5 3.2 13.2 2.5 13.8 C5 14.5 7.5 13.5 8.5 11.5 Z" fill="#dcdcdc"/><path d="M1 4.5 C3 2.5 5.5 2.5 7 4" fill="none" stroke="#dcdcdc" stroke-width="1.2"/><path d="M0.5 5.5 L1 2.5 L3 4.8Z" fill="#dcdcdc"/><path d="M12.5 9 V14" stroke="#dcdcdc" stroke-width="1" stroke-dasharray="1 1.2"/></g></svg>
<svg class="a" style="left:24px;top:282.6px" width="3" height="3" viewBox="0 0 3 3"><path d="M3 0 V3 H0Z" fill="#a8a8a8"/></svg>
<svg class="a" style="left:8px;top:291.3px" width="16" height="16" viewBox="0 0 16 16"><g transform="translate(8 8) scale(0.87) translate(-8 -8)"><path d="M10 1.5 L14.5 6 L8.5 12 L4 12 L1.5 9.5 Z" fill="none" stroke="#dcdcdc" stroke-width="1.2"/><path d="M10 1.5 L14.5 6 L10.5 10 L6 5.5 Z" fill="#dcdcdc"/><path d="M8 13.5 H14.5" stroke="#dcdcdc" stroke-width="1.2"/></g></svg>
<svg class="a" style="left:24px;top:304.3px" width="3" height="3" viewBox="0 0 3 3"><path d="M3 0 V3 H0Z" fill="#a8a8a8"/></svg>
<svg class="a" style="left:8px;top:312.9px" width="16" height="16" viewBox="0 0 16 16"><g transform="translate(8 8) scale(0.87) translate(-8 -8)"><defs><linearGradient id="gg" x1="0" y1="0" x2="1" y2="1"><stop offset="0" stop-color="#1e1e1e"/><stop offset="1" stop-color="#e8e8e8"/></linearGradient></defs><rect x="1.5" y="1.5" width="13" height="13" fill="url(#gg)" stroke="#dcdcdc" stroke-width="1.2"/></g></svg>
<svg class="a" style="left:24px;top:325.9px" width="3" height="3" viewBox="0 0 3 3"><path d="M3 0 V3 H0Z" fill="#a8a8a8"/></svg>
<svg class="a" style="left:8px;top:334.6px" width="16" height="16" viewBox="0 0 16 16"><g transform="translate(8 8) scale(0.87) translate(-8 -8)"><path d="M6 2 C9 0.5 14 1 14.5 3.5 C14.5 6 12 8 10 9.5 L4 14.5 L2.5 13 L6 9 C4 8 3.5 4 6 2Z" fill="#dcdcdc"/><path d="M6.5 7.5 L9 5" stroke="#535353" stroke-width="1.2"/></g></svg>
<svg class="a" style="left:24px;top:347.6px" width="3" height="3" viewBox="0 0 3 3"><path d="M3 0 V3 H0Z" fill="#a8a8a8"/></svg>
<svg class="a" style="left:8px;top:356.2px" width="16" height="16" viewBox="0 0 16 16"><g transform="translate(8 8) scale(0.87) translate(-8 -8)"><circle cx="10" cy="6" r="5" fill="#dcdcdc"/><path d="M7 9 L1.5 14.5" stroke="#dcdcdc" stroke-width="1.7"/></g></svg>
<svg class="a" style="left:24px;top:369.2px" width="3" height="3" viewBox="0 0 3 3"><path d="M3 0 V3 H0Z" fill="#a8a8a8"/></svg>
<div class="a" style="left:4px;top:375.9px;width:25px;height:20px;background:#383838;border-radius:1px"></div>
<svg class="a" style="left:8px;top:377.9px" width="16" height="16" viewBox="-0.5 -0.5 16 16"><g transform="translate(7.5 7.5) rotate(45) scale(0.88) translate(-5 -8.5)"><path d="M5 16.5 C3.5 13 1 11 1 8.5 C1 6.5 2.3 5.5 2.8 4.2 H7.2 C7.7 5.5 9 6.5 9 8.5 C9 11 6.5 13 5 16.5Z" fill="none" stroke="#dcdcdc" stroke-width="1.15" stroke-linejoin="round"/><rect x="2.3" y="0" width="5.4" height="3.4" fill="#dcdcdc"/><circle cx="5" cy="9" r="1.3" fill="#dcdcdc"/><path d="M5 10 V16" stroke="#dcdcdc" stroke-width="0.9"/></g></svg>
<svg class="a" style="left:24px;top:390.9px" width="3" height="3" viewBox="0 0 3 3"><path d="M3 0 V3 H0Z" fill="#a8a8a8"/></svg>
<svg class="a" style="left:8px;top:399.6px" width="16" height="16" viewBox="0 0 16 16"><g transform="translate(8 8) scale(0.87) translate(-8 -8)"><path d="M2 1.5 H14 V5 H13 L12.3 3 H9.2 V13.5 L11 14 V15 H5 V14 L6.8 13.5 V3 H3.7 L3 5 H2 Z" fill="#dcdcdc"/></g></svg>
<svg class="a" style="left:24px;top:412.6px" width="3" height="3" viewBox="0 0 3 3"><path d="M3 0 V3 H0Z" fill="#a8a8a8"/></svg>
<svg class="a" style="left:8px;top:421.2px" width="16" height="16" viewBox="0 0 16 16"><path d="M3.5 1 L3.5 13.5 L6.5 10.5 L9 15 L11 14 L8.8 9.5 L13 9.5 Z" fill="#dcdcdc"/></svg>
<svg class="a" style="left:24px;top:434.2px" width="3" height="3" viewBox="0 0 3 3"><path d="M3 0 V3 H0Z" fill="#a8a8a8"/></svg>
<svg class="a" style="left:8px;top:442.8px" width="16" height="16" viewBox="0 0 16 16"><path d="M6 2 C8 0.5 9 3.5 10.5 3 C12.5 2.5 15 4 13.5 6.5 C12.5 8 14 9.5 12.5 11 C11 12.5 9 11 8 13 C6.5 15 4 14 4.5 12 C5 10 1.5 10.5 1.5 8 C1.5 5.5 5 6 6 2Z" fill="#6e6e6e" stroke="#dcdcdc" stroke-width="1.1"/></svg>
<svg class="a" style="left:24px;top:455.8px" width="3" height="3" viewBox="0 0 3 3"><path d="M3 0 V3 H0Z" fill="#a8a8a8"/></svg>
<svg class="a" style="left:8px;top:464.5px" width="16" height="16" viewBox="0 0 16 16"><g transform="translate(8 8) scale(0.87) translate(-8 -8)"><g stroke="#dcdcdc" stroke-width="2.1" stroke-linecap="round"><path d="M5.6 9 V4"/><path d="M8.2 8.5 V2.2"/><path d="M10.8 8.5 V2.8"/><path d="M13.3 9 V4.8"/><path d="M5.2 11 L2 8.5"/></g><path d="M4.5 8.5 H14.4 V11 C14.4 13.8 12.5 15.6 10 15.6 C7.5 15.6 6 14.5 4.5 12 Z" fill="#dcdcdc"/><path d="M7 9.2 V6 M9.5 9.2 V5 M12 9.2 V6" stroke="#535353" stroke-width="0.5"/></g></svg>
<svg class="a" style="left:24px;top:477.5px" width="3" height="3" viewBox="0 0 3 3"><path d="M3 0 V3 H0Z" fill="#a8a8a8"/></svg>
<svg class="a" style="left:8px;top:486.1px" width="16" height="16" viewBox="0 0 16 16"><g transform="translate(8 8) scale(0.87) translate(-8 -8)"><circle cx="6.5" cy="6.5" r="5" fill="none" stroke="#dcdcdc" stroke-width="1.4"/><path d="M10 10 L15 15" stroke="#dcdcdc" stroke-width="1.8"/><path d="M4 4.5 A3 3 0 0 1 8 3.5" fill="none" stroke="#dcdcdc" stroke-width="0.9"/></g></svg>
<svg class="a" style="left:24px;top:499.1px" width="3" height="3" viewBox="0 0 3 3"><path d="M3 0 V3 H0Z" fill="#a8a8a8"/></svg>
<svg class="a" style="left:8px;top:507.8px" width="16" height="16" viewBox="0 0 16 16"><circle cx="2.5" cy="8" r="1.5" fill="#dcdcdc"/><circle cx="8" cy="8" r="1.5" fill="#dcdcdc"/><circle cx="13.5" cy="8" r="1.5" fill="#dcdcdc"/></svg>
<svg class="a" style="left:24px;top:520.8px" width="3" height="3" viewBox="0 0 3 3"><path d="M3 0 V3 H0Z" fill="#a8a8a8"/></svg>
<div class="a" style="left:4px;top:532px;width:6px;height:6px;background:#000;border:1px solid #ddd"></div>
<div class="a" style="left:7px;top:535px;width:6px;height:6px;background:#fff;border:1px solid #ddd;z-index:-0"></div>
<div class="a" style="left:4px;top:532px;width:6px;height:6px;background:#000;border:1px solid #ddd"></div>
<svg class="a" style="left:18px;top:531px" width="10" height="10" viewBox="0 0 10 10"><path d="M1.5 3 H7.5 V8.5" fill="none" stroke="#dcdcdc" stroke-width="1.1"/><path d="M0 3 L2.5 1 V5Z M7.5 10 L5.5 7.5 H9.5Z" fill="#dcdcdc"/></svg>
<div class="a" style="left:12px;top:553px;width:16px;height:16px;background:#d8431f;border:1px solid #f0c0b0"></div>
<div class="a" style="left:3.5px;top:544.5px;width:16px;height:16px;background:#fff;border:1px solid #3a3a3a"></div>
<svg class="a" style="left:8px;top:578px" width="16" height="13" viewBox="0 0 16 13"><rect x="0.6" y="0.6" width="14.8" height="11.8" fill="none" stroke="#dcdcdc" stroke-width="1.2"/><circle cx="8" cy="6.5" r="3.3" fill="none" stroke="#dcdcdc" stroke-width="1" stroke-dasharray="1 1"/></svg>
<svg class="a" style="left:8px;top:599px" width="16" height="13" viewBox="0 0 16 13"><rect x="5" y="0.6" width="10.4" height="8" fill="none" stroke="#dcdcdc" stroke-width="1.2"/><rect x="0.6" y="4" width="10.4" height="8" fill="#535353" stroke="#dcdcdc" stroke-width="1.2"/></svg>
<svg class="a" style="left:24px;top:610px" width="3" height="3" viewBox="0 0 3 3"><path d="M3 0 V3 H0Z" fill="#a8a8a8"/></svg>
  <!-- RIGHT DOCK -->
  <div class="a" style="left:965px;top:47px;width:235px;height:642px;background:#3c3c3c"></div>
  <div class="a" style="left:967px;top:47px;width:233px;height:11px;background:#3c3c3c"></div>
  <svg class="a" style="left:986.5px;top:49.5px" width="7" height="6" viewBox="0 0 7 6"><path d="M3 0.5 L0.5 3 L3 5.5Z M6.3 0.5 L3.8 3 L6.3 5.5Z" fill="#a0a0a0"/></svg>
  <svg class="a" style="left:1186.5px;top:49.5px" width="7" height="6" viewBox="0 0 7 6"><path d="M0.5 0.5 L3 3 L0.5 5.5Z M3.8 0.5 L6.3 3 L3.8 5.5Z" fill="#a0a0a0"/></svg>
  <!-- narrow icon column -->
  <div class="a" style="left:968px;top:58px;width:30px;height:33px;background:#535353"></div>
  <div class="a" style="left:968px;top:93px;width:30px;height:32px;background:#535353"></div>
  <div class="a" style="left:968px;top:127px;width:30px;height:56px;background:#535353"></div>
  <div class="a" style="left:968px;top:185px;width:30px;height:504px;background:#535353"></div>
  <div class="a" style="left:975px;top:61px;width:16px;height:2px;background:repeating-linear-gradient(90deg,#474747 0 1px,transparent 1px 2px)"></div>
  <div class="a" style="left:975px;top:96px;width:16px;height:2px;background:repeating-linear-gradient(90deg,#474747 0 1px,transparent 1px 2px)"></div>
  <div class="a" style="left:975px;top:130px;width:16px;height:2px;background:repeating-linear-gradient(90deg,#474747 0 1px,transparent 1px 2px)"></div>
  <svg class="a" style="left:977px;top:71px" width="15" height="15" viewBox="0 0 15 15"><rect x="1.5" y="1" width="3.6" height="3.6" fill="none" stroke="#dcdcdc" stroke-width="1"/><rect x="1.5" y="5.9" width="3.6" height="3.6" fill="none" stroke="#dcdcdc" stroke-width="1"/><rect x="1" y="10.4" width="4.6" height="4.4" fill="#dcdcdc"/><path d="M9.2 3.2 C13 3.5 13.6 7.8 11.6 10.4 C10.8 11.5 10.2 12.5 9.8 14" fill="none" stroke="#dcdcdc" stroke-width="1.3"/><path d="M7.3 2.6 L10.3 0.6 L10 5.4Z" fill="#dcdcdc"/></svg>
  <svg class="a" style="left:976px;top:104px" width="16" height="15" viewBox="0 0 16 15"><path d="M5 0.8 L9 2.6 V7.2 L5 9.2 L1 7.2 V2.6 Z M1 2.6 L5 4.6 L9 2.6 M5 4.6 V9.2" fill="none" stroke="#dcdcdc" stroke-width="1" stroke-linejoin="round"/><rect x="11" y="1" width="3.5" height="3" fill="#dcdcdc"/><rect x="11" y="5.3" width="3.5" height="3" fill="#dcdcdc"/><path d="M1 10.8 H14.5 V13.8 H1Z" fill="#dcdcdc"/><path d="M11 10.8 L14.5 13.8" stroke="#535353" stroke-width="0.8"/></svg>
  <div class="t" style="left:977.5px;top:139.6px;font-size:14.5px;color:#dcdcdc;-webkit-text-stroke:0">A</div>
  <div class="a" style="left:988.5px;top:140px;width:1.2px;height:13px;background:#dcdcdc"></div>
  <svg class="a" style="left:981px;top:164.5px" width="11" height="12" viewBox="0 0 11 12"><path d="M6.2 0.5 V11.5 M9.3 0.5 V11.5" fill="none" stroke="#dcdcdc" stroke-width="1.6"/><path d="M10 0.5 H5 C1.5 0.5 0.5 2.5 0.5 3.5 C0.5 5.2 2 6.6 5.5 6.6 V0.5Z" fill="#dcdcdc"/></svg>

  <!-- COLOR PANEL -->
  <div class="a" style="left:1001px;top:58px;width:198px;height:113px;background:#535353"></div>
  <div class="a" style="left:1039px;top:58px;width:160px;height:23px;background:#424242"></div>
  <div class="a" style="left:1094px;top:58px;width:1px;height:23px;background:#3a3a3a"></div>
  <div class="t" style="left:1008.4px;top:66.7px;font-size:8.59px;font-weight:bold;color:#e8e8e8">Color</div>
  <div class="t" style="left:1046.5px;top:66.8px;font-size:8.56px;font-weight:bold;color:#b4b4b4">Swatches</div>
  <svg class="a" style="left:1186px;top:66px" width="8" height="7" viewBox="0 0 8 7"><path d="M0 0.75 H8 M0 3.5 H8 M0 6.25 H8" stroke="#bcbcbc" stroke-width="1.2"/></svg>
  <div class="a" style="left:1017px;top:99px;width:16px;height:15px;background:#d8431f;border:1px solid #e8b0a0"></div>
  <div class="a" style="left:1008px;top:90px;width:17px;height:17px;background:#fff;border:1px solid #3a3a3a;box-shadow:0 0 0 1px #777"></div>
  <div class="a" style="left:1038px;top:87px;width:118px;height:79px;background:linear-gradient(to bottom,rgba(0,0,0,0),#000),linear-gradient(to right,#fff,#e8281e)"></div>
  <svg class="a" style="left:1036px;top:85px" width="8" height="8" viewBox="0 0 8 8"><path d="M2 2 H7 A5 5 0 0 1 2 7Z" fill="#fff"/><path d="M7 2 A5 5 0 0 1 2 7" fill="none" stroke="#111" stroke-width="1"/></svg>
  <div class="a" style="left:1170px;top:87px;width:16px;height:79px;background:linear-gradient(to bottom,#f02a2a 0%,#f43ad8 15%,#1a30ff 32%,#30e8ff 48%,#38e038 65%,#f0f020 82%,#ff3020 100%)"></div>
  <svg class="a" style="left:1163px;top:160px" width="6" height="8" viewBox="0 0 6 8"><path d="M0.5 0.5 L5.5 4 L0.5 7.5Z" fill="#eee"/></svg>

  <!-- ADJ PANEL -->
  <div class="a" style="left:1001px;top:173px;width:198px;height:108px;background:#535353"></div>
  <div class="a" style="left:1001px;top:173px;width:198px;height:24px;background:#424242"></div>
  <div class="a" style="left:1054px;top:173px;width:69px;height:24px;background:#535353"></div>
  <div class="t" style="left:1008.2px;top:181.3px;font-size:8.91px;font-weight:bold;color:#b4b4b4">Libraries</div>
  <div class="t" style="left:1062.1px;top:181.3px;font-size:8.83px;font-weight:bold;color:#e8e8e8">Adjustments</div>
  <svg class="a" style="left:1186px;top:182px" width="8" height="7" viewBox="0 0 8 7"><path d="M0 0.75 H8 M0 3.5 H8 M0 6.25 H8" stroke="#bcbcbc" stroke-width="1.2"/></svg>
  <div class="t" style="left:1007.8px;top:202.4px;font-size:8.8px;font-weight:bold;color:#cfcfcf">Add an adjustment</div>
  <svg class="a" style="left:1040px;top:216px" width="15" height="14" viewBox="0 0 15 14"><circle cx="7.5" cy="7" r="3.6" fill="none" stroke="#dcdcdc" stroke-width="1.1"/><path d="M7.5 3.4 A3.6 3.6 0 0 1 7.5 10.6Z" fill="#dcdcdc"/><path d="M7.5 0 V2 M7.5 12 V14 M0.5 7 H2.5 M12.5 7 H14.5 M2.5 2 L3.8 3.3 M11.2 10.7 L12.5 12 M12.5 2 L11.2 3.3 M3.8 10.7 L2.5 12" stroke="#dcdcdc" stroke-width="1"/></svg>
  <svg class="a" style="left:1060px;top:216px" width="15" height="12" viewBox="0 0 15 12"><path d="M0.5 12 V7 L1.5 5 L2.5 8 L3.5 4 L4.5 6 L5.5 3 L6.5 6 L7.5 1 L8.5 5 L9.5 2 L10.5 6 L11.5 3 L12.5 7 L13.5 4 L14.5 6 V12Z" fill="#dcdcdc"/><rect x="0.5" y="8" width="14" height="4" fill="#dcdcdc"/></svg>
  <svg class="a" style="left:1081px;top:216px" width="14" height="13" viewBox="0 0 14 13"><rect x="0.6" y="0.6" width="12.8" height="11.8" fill="none" stroke="#dcdcdc" stroke-width="1.1"/><path d="M4.6 0.6 V12.4 M8.8 0.6 V12.4 M0.6 4.6 H13.4 M0.6 8.6 H13.4" stroke="#7a7a7a" stroke-width="0.9"/><path d="M0.6 12.4 C6 10 7 3 13.4 0.6" fill="none" stroke="#dcdcdc" stroke-width="1"/></svg>
  <svg class="a" style="left:1101px;top:216px" width="14" height="13" viewBox="0 0 14 13"><rect x="0.6" y="0.6" width="12.8" height="11.8" fill="#dcdcdc" stroke="#dcdcdc" stroke-width="1.1"/><path d="M1 12 L13 1 V12Z" fill="#4a4a4a"/><path d="M2.5 3.5 H5.5 M4 2 V5" stroke="#4a4a4a" stroke-width="1"/><path d="M8.5 9.5 H11.5" stroke="#dcdcdc" stroke-width="1"/></svg>
  <svg class="a" style="left:1121px;top:217px" width="14" height="13" viewBox="0 0 14 13"><path d="M1 1 H13 L7 12.5Z" fill="#6a6a6a" stroke="#dcdcdc" stroke-width="1.2"/><circle cx="7" cy="4.5" r="2" fill="#5a5a5a"/></svg>
  <svg class="a" style="left:1031px;top:239px" width="14" height="13" viewBox="0 0 14 13"><rect x="0.6" y="0.6" width="12.8" height="11.8" fill="none" stroke="#dcdcdc" stroke-width="1.1"/><defs><linearGradient id="ag1"><stop offset="0" stop-color="#222"/><stop offset="1" stop-color="#eee"/></linearGradient><linearGradient id="ag2"><stop offset="0" stop-color="#333"/><stop offset="1" stop-color="#fff"/></linearGradient></defs><rect x="1.2" y="6.2" width="11.6" height="5.6" fill="url(#ag1)"/><path d="M1.2 1.2 H12.8 V6 H1.2Z" fill="#dcdcdc"/><rect x="2.5" y="1.8" width="2" height="3.5" fill="#555"/><rect x="6" y="1.8" width="2" height="3.5" fill="#555"/><rect x="9.5" y="1.8" width="2" height="3.5" fill="#555"/></svg>
  <svg class="a" style="left:1050px;top:239px" width="15" height="13" viewBox="0 0 15 13"><path d="M7.5 2 V4 M2 3.5 H13 M3.5 3.5 L1 8 M3.5 3.5 L6 8 M11.5 3.5 L9 8 M11.5 3.5 L14 8" fill="none" stroke="#dcdcdc" stroke-width="1"/><circle cx="7.5" cy="2" r="1.6" fill="none" stroke="#dcdcdc" stroke-width="1"/><path d="M0.5 8 H6.5 A3 3.5 0 0 1 0.5 8Z M8.5 8 H14.5 A3 3.5 0 0 1 8.5 8Z" fill="#dcdcdc"/></svg>
  <svg class="a" style="left:1071px;top:239px" width="14" height="13" viewBox="0 0 14 13"><rect x="0.6" y="0.6" width="12.8" height="11.8" fill="#dcdcdc" stroke="#dcdcdc" stroke-width="1.1"/><rect x="2" y="2" width="4.5" height="9" fill="#5a5a5a"/></svg>
  <svg class="a" style="left:1091px;top:239px" width="15" height="14" viewBox="0 0 15 14"><path d="M0.5 3 H3.5 L4.5 1.2 H8.5 L9.5 3 H11.5 V6.3 A3.6 3.6 0 0 0 7.6 9.5 H0.5Z" fill="#dcdcdc"/><circle cx="6" cy="5.8" r="2.3" fill="#535353"/><circle cx="6" cy="5.8" r="1.5" fill="none" stroke="#dcdcdc" stroke-width="0.8"/><circle cx="11.3" cy="10" r="2.9" fill="#535353" stroke="#dcdcdc" stroke-width="1.1"/></svg>
  <svg class="a" style="left:1111px;top:239px" width="14" height="13" viewBox="0 0 14 13"><circle cx="7" cy="4.5" r="4" fill="#9a9a9a"/><circle cx="4.5" cy="8.5" r="4" fill="#dcdcdc" fill-opacity="0.9"/><circle cx="9.5" cy="8.5" r="4" fill="#dcdcdc" fill-opacity="0.9"/><circle cx="7" cy="7.5" r="2" fill="#6a6a6a"/></svg>
  <svg class="a" style="left:1131px;top:239px" width="14" height="13" viewBox="0 0 14 13"><rect x="0.6" y="0.6" width="12.8" height="11.8" fill="#dcdcdc"/><g fill="#4a4a4a"><rect x="2" y="2" width="2.6" height="2.3"/><rect x="5.7" y="2" width="2.6" height="2.3"/><rect x="9.4" y="2" width="2.6" height="2.3"/><rect x="2" y="5.4" width="2.6" height="2.3"/><rect x="5.7" y="5.4" width="2.6" height="2.3"/><rect x="9.4" y="5.4" width="2.6" height="2.3"/><rect x="2" y="8.8" width="2.6" height="2.3"/><rect x="5.7" y="8.8" width="2.6" height="2.3"/><rect x="9.4" y="8.8" width="2.6" height="2.3"/></g></svg>
  <svg class="a" style="left:1040px;top:262px" width="14" height="12" viewBox="0 0 14 12"><rect x="0.6" y="0.6" width="12.8" height="10.8" fill="#dcdcdc" stroke="#dcdcdc" stroke-width="1.1"/><path d="M1.5 10.5 L12.5 1.5" stroke="#4a4a4a" stroke-width="1"/><ellipse cx="7" cy="6" rx="3" ry="2.5" fill="#4a4a4a" transform="rotate(-40 7 6)"/></svg>
  <svg class="a" style="left:1061px;top:262px" width="14" height="12" viewBox="0 0 14 12"><defs><linearGradient id="ag3" x1="0" y1="0" x2="1" y2="1"><stop offset="0" stop-color="#ddd"/><stop offset="0.3" stop-color="#666"/><stop offset="0.5" stop-color="#ccc"/><stop offset="0.7" stop-color="#555"/><stop offset="1" stop-color="#ddd"/></linearGradient></defs><rect x="0.6" y="0.6" width="12.8" height="10.8" fill="url(#ag3)" stroke="#dcdcdc" stroke-width="1.1"/></svg>
  <svg class="a" style="left:1081px;top:262px" width="14" height="12" viewBox="0 0 14 12"><rect x="0.6" y="0.6" width="12.8" height="10.8" fill="#dcdcdc" stroke="#dcdcdc" stroke-width="1.1"/><path d="M1.5 7 L4 5 L6 6 L9 3 L12.5 2 V5 L9 6 L6 8.5 L4 7.5 L1.5 9.5Z" fill="#4a4a4a"/></svg>
  <svg class="a" style="left:1101px;top:262px" width="14" height="12" viewBox="0 0 14 12"><rect x="0.6" y="0.6" width="12.8" height="10.8" fill="#8a8a8a" stroke="#dcdcdc" stroke-width="1.1"/><path d="M1 1 L7 6 L13 1Z" fill="#dcdcdc"/><path d="M1 11 L7 6 L13 11Z" fill="#6a6a6a"/></svg>
  <svg class="a" style="left:1121px;top:262px" width="14" height="12" viewBox="0 0 14 12"><defs><linearGradient id="ag4"><stop offset="0" stop-color="#222"/><stop offset="1" stop-color="#eee"/></linearGradient></defs><rect x="0.6" y="0.6" width="12.8" height="10.8" fill="url(#ag4)" stroke="#dcdcdc" stroke-width="1.1"/></svg>

  <!-- LAYERS PANEL -->
  <div class="a" style="left:1001px;top:284px;width:198px;height:405px;background:#535353"></div>
  <div class="a" style="left:1044px;top:284px;width:155px;height:23px;background:#424242"></div>

  <div class="a" style="left:1097px;top:284px;width:1px;height:23px;background:#3a3a3a"></div>
  <div class="a" style="left:1138px;top:284px;width:1px;height:23px;background:#3a3a3a"></div>
  <div class="t" style="left:1008.2px;top:292.0px;font-size:8.57px;font-weight:bold;color:#e8e8e8">Layers</div>
  <div class="t" style="left:1051.5px;top:291.9px;font-size:8.79px;font-weight:bold;color:#b4b4b4">Channels</div>
  <div class="t" style="left:1106.3px;top:292.0px;font-size:8.64px;font-weight:bold;color:#b4b4b4">Paths</div>
  <svg class="a" style="left:1186px;top:293px" width="8" height="7" viewBox="0 0 8 7"><path d="M0 0.75 H8 M0 3.5 H8 M0 6.25 H8" stroke="#bcbcbc" stroke-width="1.2"/></svg>
  <!-- filter row -->
  <div class="box" style="left:1004px;top:315px;width:74px;height:14px;background:#3f3f3f;border-color:#393939"></div>
  <svg class="a" style="left:1010px;top:317px" width="11" height="11" viewBox="0 0 11 11"><circle cx="6.5" cy="4.5" r="3.4" fill="none" stroke="#dcdcdc" stroke-width="1.2"/><path d="M4 7 L1 10" stroke="#dcdcdc" stroke-width="1.5"/></svg>
  <div class="t" style="left:1020.9px;top:317.8px;font-size:9.38px;color:#dcdcdc">Kind</div>
  <svg class="a" style="left:1069px;top:320px" width="8" height="6" viewBox="0 0 8 6"><path d="M1 1.5 L4 4.5 L7 1.5" fill="none" stroke="#d0d0d0" stroke-width="1.1"/></svg>
  <svg class="a" style="left:1087px;top:317px" width="12" height="11" viewBox="0 0 12 11"><rect x="0.6" y="0.6" width="10.8" height="9.8" fill="none" stroke="#dcdcdc" stroke-width="1.1"/><path d="M1.5 9.5 V7 L3.5 4 L5.5 6.5 L7.5 4.5 L10.5 7.5 V9.5Z" fill="#dcdcdc"/></svg>
  <svg class="a" style="left:1107px;top:317px" width="11" height="11" viewBox="0 0 11 11"><circle cx="5.5" cy="5.5" r="4.6" fill="#dcdcdc"/><path d="M8.8 2.2 L2.2 8.8 A4.6 4.6 0 0 1 8.8 2.2Z" fill="#535353"/><circle cx="5.5" cy="5.5" r="4.6" fill="none" stroke="#dcdcdc" stroke-width="1"/></svg>
  <svg class="a" style="left:1127px;top:317px" width="11" height="11" viewBox="0 0 11 11"><path d="M0.5 0.5 H10.5 V3.5 H9.8 L9.2 1.8 H6.3 V9.3 L7.6 9.8 V10.5 H3.4 V9.8 L4.7 9.3 V1.8 H1.8 L1.2 3.5 H0.5Z" fill="#dcdcdc"/></svg>
  <svg class="a" style="left:1147px;top:317px" width="12" height="11" viewBox="0 0 12 11"><rect x="1.5" y="1.5" width="9" height="8" fill="none" stroke="#dcdcdc" stroke-width="1.1"/><circle cx="1.5" cy="1.5" r="1.3" fill="#dcdcdc"/><circle cx="10.5" cy="1.5" r="1.3" fill="#dcdcdc"/><circle cx="1.5" cy="9.5" r="1.3" fill="#dcdcdc"/><circle cx="10.5" cy="9.5" r="1.3" fill="#dcdcdc"/></svg>
  <svg class="a" style="left:1168px;top:317px" width="11" height="11" viewBox="0 0 11 11"><path d="M4 0.5 H8 L10.5 3 V10.5 H6" fill="none" stroke="#dcdcdc" stroke-width="1"/><rect x="0.5" y="5" width="6" height="5.5" fill="#dcdcdc"/><path d="M1.8 5 V3.5 A1.7 1.7 0 0 1 5.2 3.5 V5" fill="none" stroke="#dcdcdc" stroke-width="1"/></svg>
  <div class="a" style="left:1189px;top:314px;width:8px;height:15px;border-radius:4px;background:#404040"></div>
  <div class="a" style="left:1189px;top:314px;width:8px;height:8px;border-radius:50%;background:#e6e6e6"></div>
  <div class="a" style="left:1001px;top:332px;width:198px;height:1px;background:#474747"></div>
  <!-- blend row -->
  <div class="box" style="left:1004px;top:338px;width:109px;height:14px;background:#3f3f3f;border-color:#393939"></div>
  <div class="t" style="left:1009.6px;top:340.8px;font-size:9.09px;color:#dcdcdc">Normal</div>
  <svg class="a" style="left:1104px;top:342px" width="8" height="6" viewBox="0 0 8 6"><path d="M1 1.5 L4 4.5 L7 1.5" fill="none" stroke="#d0d0d0" stroke-width="1.1"/></svg>
  <div class="t" style="left:1117.1px;top:340.7px;font-size:9.18px;color:#c4c4c4">Opacity:</div>
  <div class="box" style="left:1153px;top:338px;width:30px;height:14px;background:#3f3f3f;border-color:#393939"></div>
  <div class="t" style="left:1155.7px;top:341.4px;font-size:8.42px;color:#e0e0e0">100%</div>
  <div class="box" style="left:1184px;top:338px;width:12px;height:14px;background:#3f3f3f;border-color:#393939"></div>
  <svg class="a" style="left:1186px;top:342px" width="8" height="6" viewBox="0 0 8 6"><path d="M1 1.5 L4 4.5 L7 1.5" fill="none" stroke="#d0d0d0" stroke-width="1.1"/></svg>
  <div class="a" style="left:1001px;top:356px;width:198px;height:1px;background:#474747"></div>
  <!-- lock row -->
  <div class="t" style="left:1004.6px;top:362.4px;font-size:9.22px;color:#c4c4c4">Lock:</div>
  <svg class="a" style="left:1032px;top:362px" width="10" height="10" viewBox="0 0 10 10"><rect x="0.5" y="0.5" width="9" height="9" fill="#8a8a8a" stroke="#b0b0b0" stroke-width="0.8"/><g fill="#454545"><rect x="1" y="1" width="2.7" height="2.7"/><rect x="6.3" y="1" width="2.7" height="2.7"/><rect x="3.6" y="3.6" width="2.7" height="2.7"/><rect x="1" y="6.3" width="2.7" height="2.7"/><rect x="6.3" y="6.3" width="2.7" height="2.7"/></g></svg>
  <svg class="a" style="left:1050px;top:361px" width="12" height="12" viewBox="0 0 12 12"><path d="M11.5 0.5 L5 7 L6 8 Z" fill="#9a9a9a"/><path d="M4.5 7.5 C3 7.5 2.5 9 2 10 C1.7 10.7 1.2 11 0.5 11.5 C3 12 5 11 5.8 9 Z" fill="#9a9a9a"/></svg>
  <svg class="a" style="left:1067px;top:361px" width="12" height="12" viewBox="0 0 12 12"><path d="M6 1 V11 M1 6 H11" stroke="#dcdcdc" stroke-width="1.1"/><path d="M6 0.3 L4.3 2.4 H7.7Z M6 11.7 L4.3 9.6 H7.7Z M0.3 6 L2.4 4.3 V7.7Z M11.7 6 L9.6 4.3 V7.7Z" fill="#dcdcdc"/></svg>
  <svg class="a" style="left:1086px;top:361px" width="12" height="12" viewBox="0 0 12 12"><path d="M2.5 0 V11 M0 2.5 H11 M9.5 2.5 V11 M0 9.5 H11" stroke="#dcdcdc" stroke-width="0.9" stroke-dasharray="9 1"/><path d="M3 3 H7 L9 5 V9 H3Z" fill="none" stroke="#dcdcdc" stroke-width="1"/></svg>
  <svg class="a" style="left:1105px;top:361px" width="10" height="12" viewBox="0 0 10 12"><rect x="0.5" y="5" width="9" height="6.5" fill="#dcdcdc"/><path d="M2.3 5 V3.3 A2.7 2.7 0 0 1 7.7 3.3 V5" fill="none" stroke="#dcdcdc" stroke-width="1.3"/><circle cx="5" cy="8" r="1" fill="#535353"/></svg>
  <div class="t" style="left:1136.3px;top:362.3px;font-size:9.37px;color:#c4c4c4">Fill:</div>
  <div class="box" style="left:1153px;top:360px;width:30px;height:14px;background:#3f3f3f;border-color:#393939"></div>
  <div class="t" style="left:1155.7px;top:363.1px;font-size:8.42px;color:#e0e0e0">100%</div>
  <div class="box" style="left:1184px;top:360px;width:12px;height:14px;background:#3f3f3f;border-color:#393939"></div>
  <svg class="a" style="left:1186px;top:364px" width="8" height="6" viewBox="0 0 8 6"><path d="M1 1.5 L4 4.5 L7 1.5" fill="none" stroke="#d0d0d0" stroke-width="1.1"/></svg>
  <div class="a" style="left:1001px;top:379px;width:198px;height:1px;background:#474747"></div>
  <!-- layer rows -->
  <div class="a" style="left:1001px;top:412px;width:185px;height:32px;background:#4f4f4f"></div>
  <div class="a" style="left:1187px;top:380px;width:10px;height:290px;background:#4f4f4f"></div>
  <div class="a" style="left:1197px;top:58px;width:2px;height:631px;background:#444"></div>
  <div class="a" style="left:1026px;top:380px;width:160px;height:32px;background:#666666"></div>
  <div class="a" style="left:1026px;top:380px;width:1px;height:64px;background:#4a4a4a"></div>
  <div class="a" style="left:1001px;top:411px;width:185px;height:1px;background:#4c4c4c"></div>
  <div class="a" style="left:1001px;top:443px;width:185px;height:1px;background:#484848"></div>
  <svg class="a" style="left:1007px;top:392px" width="13" height="9" viewBox="0 0 13 9"><path d="M0.5 4.5 C3 0.5 10 0.5 12.5 4.5 C10 8.5 3 8.5 0.5 4.5Z" fill="#e6e6e6"/><circle cx="6.5" cy="4.5" r="2.2" fill="#535353"/><circle cx="6.5" cy="4.5" r="1" fill="#e6e6e6"/></svg>
  <svg class="a" style="left:1007px;top:424px" width="13" height="9" viewBox="0 0 13 9"><path d="M0.5 4.5 C3 0.5 10 0.5 12.5 4.5 C10 8.5 3 8.5 0.5 4.5Z" fill="#e6e6e6"/><circle cx="6.5" cy="4.5" r="2.2" fill="#535353"/><circle cx="6.5" cy="4.5" r="1" fill="#e6e6e6"/></svg>
  <!-- thumb 1 -->
  <div class="a" style="left:1029px;top:382px;width:27px;height:28px;border:1px solid #2e2e2e;background-color:#fff;background-image:linear-gradient(45deg,#cacaca 25%,transparent 25%,transparent 75%,#cacaca 75%),linear-gradient(45deg,#cacaca 25%,transparent 25%,transparent 75%,#cacaca 75%);background-size:5px 5px;background-position:0 0,2.5px 2.5px"></div>
  <svg class="a" style="left:1027px;top:380px" width="31" height="32" viewBox="0 0 31 32"><path d="M0.5 6 V0.5 H6 M25 0.5 H30.5 V6 M30.5 26 V31.5 H25 M6 31.5 H0.5 V26" fill="none" stroke="#e0e0e0" stroke-width="1"/><path d="M15 9.5 L19 15 H11Z" fill="#d8431f"/></svg>
  <div class="a" style="left:1044px;top:398px;width:13px;height:13px;background:#4a4a4a;border:1px solid #2a2a2a"></div>
  <svg class="a" style="left:1045px;top:399px" width="11" height="11" viewBox="0 0 11 11"><rect x="2.2" y="2.2" width="6.6" height="6.6" fill="none" stroke="#d0d0d0" stroke-width="1"/><g fill="#d0d0d0"><rect x="1" y="1" width="2.4" height="2.4"/><rect x="7.6" y="1" width="2.4" height="2.4"/><rect x="1" y="7.6" width="2.4" height="2.4"/><rect x="7.6" y="7.6" width="2.4" height="2.4"/></g></svg>
  <div class="t" style="left:1062.3px;top:393.2px;font-size:8.52px;color:#e4e4e4">Shape 1</div>
  <!-- thumb 2 -->
  <div class="a" style="left:1029px;top:415px;width:27px;height:27px;background:#fff;border:1px solid #2e2e2e"></div>
  <div class="t" style="left:1061.9px;top:425.8px;font-size:9.11px;color:#dcdcdc">Background</div>
  <svg class="a" style="left:1163px;top:422px" width="10" height="12" viewBox="0 0 10 12"><rect x="0.8" y="5" width="8.4" height="6.2" fill="none" stroke="#d8d8d8" stroke-width="1.1"/><path d="M2.5 5 V3.3 A2.5 2.5 0 0 1 7.5 3.3 V5" fill="none" stroke="#d8d8d8" stroke-width="1.1"/><circle cx="5" cy="8" r="0.9" fill="#d8d8d8"/></svg>
  <!-- footer -->
  <div class="a" style="left:1001px;top:669px;width:198px;height:1px;background:#474747"></div>
  <svg class="a" style="left:1029px;top:676px" width="13" height="8" viewBox="0 0 13 8"><path d="M5.5 1 H3.5 A3 3 0 0 0 3.5 7 H5.5 M7.5 1 H9.5 A3 3 0 0 1 9.5 7 H7.5 M4 4 H9" fill="none" stroke="#8a8a8a" stroke-width="1.1"/></svg>
  <div class="t" style="left:1053px;top:674.2px;font-size:11px;font-style:italic;font-family:'Liberation Serif',serif;color:#dcdcdc">fx</div>
  <svg class="a" style="left:1065px;top:686px" width="4" height="3" viewBox="0 0 4 3"><path d="M0 0 H4 L2 3Z" fill="#ddd"/></svg>
  <svg class="a" style="left:1076px;top:675px" width="11" height="9" viewBox="0 0 11 9"><rect x="0" y="0" width="11" height="9" fill="#dcdcdc"/><circle cx="5.5" cy="4.5" r="2.3" fill="#454545"/></svg>
  <svg class="a" style="left:1099px;top:675px" width="10" height="10" viewBox="0 0 10 10"><circle cx="5" cy="5" r="4.3" fill="#dcdcdc"/><path d="M8 2 L2 8 A4.3 4.3 0 0 1 8 2Z" fill="#535353"/><circle cx="5" cy="5" r="4.3" fill="none" stroke="#dcdcdc" stroke-width="1"/></svg>
  <svg class="a" style="left:1110px;top:686px" width="4" height="3" viewBox="0 0 4 3"><path d="M0 0 H4 L2 3Z" fill="#ddd"/></svg>
  <svg class="a" style="left:1120px;top:675px" width="12" height="10" viewBox="0 0 12 10"><path d="M0 0.5 H4.5 L5.5 1.8 H12 V10 H0Z" fill="#dcdcdc"/><path d="M0 2.5 H12" stroke="#8a8a8a" stroke-width="0.6"/></svg>
  <svg class="a" style="left:1144px;top:675px" width="10" height="10" viewBox="0 0 10 10"><path d="M3 0.6 H9.4 V9.4 H0.6 V3 Z" fill="none" stroke="#dcdcdc" stroke-width="1.1"/><path d="M0.6 3 H3 V0.6Z" fill="#dcdcdc"/><rect x="1.5" y="4" width="3" height="3" fill="#dcdcdc"/></svg>
  <svg class="a" style="left:1166px;top:674px" width="10" height="11" viewBox="0 0 10 11"><path d="M0 2 H10 M3.5 2 V0.6 H6.5 V2" fill="none" stroke="#dcdcdc" stroke-width="1.1"/><path d="M1.2 3 H8.8 V10.5 H1.2Z" fill="none" stroke="#dcdcdc" stroke-width="1.1"/><path d="M3.7 4.5 V9 M6.3 4.5 V9" stroke="#dcdcdc" stroke-width="1"/></svg>
</div>
<div class="a" style="left:6px;top:0;width:1188px;height:1px;background:#8e8e8e"></div>
<div class="a" style="left:1199px;top:6px;width:1px;height:683px;background:#2e2e2e"></div>
<div class="a" style="left:0px;top:6px;width:1px;height:683px;background:#2e2e2e"></div>
<div class="a" style="left:145px;top:689px;width:908px;height:2px;background:#f4f4f4;border-radius:0 2px 0 0"></div>
</body></html>
